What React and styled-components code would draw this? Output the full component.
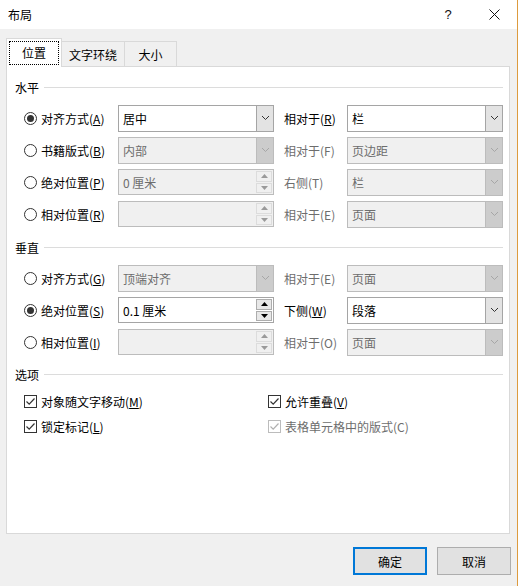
import React from 'react';
import styled, { createGlobalStyle, css } from 'styled-components';

const Global = createGlobalStyle`
  html, body { margin: 0; padding: 0; background: #fff; }
  body {
    font-family: "Noto Sans CJK SC", "Microsoft YaHei", sans-serif;
    font-size: 12px;
    color: #000;
  }
  * { box-sizing: border-box; }
`;

const Window = styled.div`
  width: 518px;
  height: 586px;
  border-right: 1px solid #dd9b3e;
  display: flex;
  flex-direction: column;
  background: #f0f0f0;
`;

const TitleBar = styled.div`
  height: 29px;
  flex: none;
  background: #fff;
  display: flex;
  align-items: center;
  padding-left: 8px;
`;

const Title = styled.div`
  flex: 1;
  font-size: 12px;
`;

const CaptionButton = styled.div`
  width: 46px;
  height: 29px;
  display: flex;
  align-items: center;
  justify-content: center;
  font-family: "Liberation Sans", sans-serif;
  font-size: 13px;
  color: #111;
`;

const Body = styled.div`
  flex: 1;
  display: flex;
  flex-direction: column;
  padding: 9px 7px 0 6px;
  min-height: 0;
`;

const TabRow = styled.div`
  display: flex;
  align-items: flex-end;
  height: 29px;
  margin-bottom: -1px;
  position: relative;
  z-index: 1;
`;

const Tab = styled.div`
  width: ${p => p.$w}px;
  display: flex;
  align-items: center;
  justify-content: center;
  border: 1px solid #d9d9d9;
  border-bottom: none;
  ${p => p.$active ? css`
    height: 29px;
    background: #fff;
  ` : css`
    height: 25px;
    margin-bottom: 1px;
    background: #f0f0f0;
    border-left: none;
  `}
`;

const Focus = styled.span`
  outline: 1px dotted #000;
  padding: 3px 12px 4px;
  line-height: 15px;
`;

const Panel = styled.div`
  flex: 1;
  background: #fff;
  border: 1px solid #d9d9d9;
  padding: 10px 6px 0 8px;
`;

const SectionHead = styled.div`
  height: 20px;
  display: flex;
  align-items: center;
  gap: 5px;
  margin-top: ${p => p.$mt || 0}px;
  margin-bottom: 5px;
  &::after {
    content: "";
    flex: 1;
    height: 1px;
    background: #dcdcdc;
  }
`;

const Grid = styled.div`
  display: grid;
  grid-template-columns: 94px 156px 73px 156px;
  padding-left: 9px;
`;

const Cell = styled.div`
  height: 32px;
  display: flex;
  align-items: center;
  gap: 4px;
  padding-left: ${p => p.$indent || 0}px;
  color: ${p => p.$disabled ? '#6d6d6d' : '#000'};
  white-space: nowrap;
`;

const RadioCircle = styled.span`
  width: 13px;
  height: 13px;
  border-radius: 50%;
  border: 1px solid #333;
  background: #fff;
  display: flex;
  align-items: center;
  justify-content: center;
  flex: none;
  &::after {
    content: "";
    width: 7px;
    height: 7px;
    border-radius: 50%;
    background: ${p => p.$on ? '#333' : 'transparent'};
  }
`;

const Field = styled.div`
  width: 156px;
  height: ${p => p.$h}px;
  display: flex;
  border: 1px solid ${p => p.$disabled ? '#bcbcbc' : '#a5a5a5'};
  background: ${p => p.$disabled ? '#f0f0f0' : '#fff'};
  color: ${p => p.$disabled ? '#6d6d6d' : '#000'};
`;

const FieldText = styled.div`
  flex: 1;
  display: flex;
  align-items: center;
  padding-left: 4px;
`;

const DropBtn = styled.div`
  width: 17px;
  display: flex;
  align-items: center;
  justify-content: center;
  border-left: 1px solid ${p => p.$disabled ? '#bcbcbc' : '#a5a5a5'};
  background: ${p => p.$disabled ? '#cccccc' : '#e3e3e3'};
`;

const SpinCol = styled.div`
  width: 17px;
  display: flex;
  flex-direction: column;
  padding: 1px 1px 1px 0;
  gap: 1px;
`;

const SpinBtn = styled.div`
  flex: 1;
  display: flex;
  align-items: center;
  justify-content: center;
  border: 1px solid ${p => p.$disabled ? '#dcdcdc' : '#adadad'};
  background: ${p => p.$disabled ? '#f0f0f0' : '#e8e8e8'};
`;

const CheckGrid = styled.div`
  display: grid;
  grid-template-columns: 244px 1fr;
  padding-left: 9px;
  margin-top: 1px;
`;

const CheckCell = styled.div`
  height: 25px;
  display: flex;
  align-items: center;
  gap: 4px;
  color: ${p => p.$disabled ? '#6d6d6d' : '#000'};
`;

const Box = styled.span`
  width: 13px;
  height: 13px;
  border: 1px solid ${p => p.$disabled ? '#bcbcbc' : '#333'};
  background: #fff;
  display: flex;
  align-items: center;
  justify-content: center;
  flex: none;
`;

const ButtonRow = styled.div`
  flex: none;
  display: flex;
  justify-content: flex-end;
  gap: 10px;
  padding: 13px 0 11px;
  margin-right: -1px;
`;

const Button = styled.div`
  width: 74px;
  height: 28px;
  display: flex;
  align-items: center;
  justify-content: center;
  background: #e1e1e1;
  border: ${p => p.$primary ? '2px solid #0078d7' : '1px solid #adadad'};
`;

const Chevron = ({ disabled }) => (
  <svg width="9" height="6" viewBox="0 0 9 6">
    <polyline points="1,1 4.5,4.5 8,1" fill="none" stroke={disabled ? '#a6a6a6' : '#333'} strokeWidth="1" />
  </svg>
);

const Tri = ({ up, disabled }) => (
  <svg width="7" height="4" viewBox="0 0 7 4">
    <polygon points={up ? '0,4 7,4 3.5,0' : '0,0 7,0 3.5,4'} fill={disabled ? '#9a9a9a' : '#000'} />
  </svg>
);

const Check = ({ disabled }) => (
  <svg width="11" height="11" viewBox="0 0 11 11">
    <polyline points="1.5,5.5 4.2,8.2 9.5,2.5" fill="none" stroke={disabled ? '#b0b0b0' : '#333'} strokeWidth="1.2" />
  </svg>
);

const Label = ({ text, acc, disabled }) => (
  <span>
    {text}({disabled ? acc : <u>{acc}</u>})
  </span>
);

const Combo = ({ value, disabled }) => (
  <Field $h={27} $disabled={disabled}>
    <FieldText>{value}</FieldText>
    <DropBtn $disabled={disabled}><Chevron disabled={disabled} /></DropBtn>
  </Field>
);

const Spin = ({ value, disabled }) => (
  <Field $h={26} $disabled={disabled}>
    <FieldText>{value}</FieldText>
    <SpinCol>
      <SpinBtn $disabled={disabled}><Tri up disabled={disabled} /></SpinBtn>
      <SpinBtn $disabled={disabled}><Tri disabled={disabled} /></SpinBtn>
    </SpinCol>
  </Field>
);

const Row = ({ radio, on, control, label2, rel }) => (
  <>
    <Cell>
      <RadioCircle $on={on} />
      <Label text={radio[0]} acc={radio[1]} />
    </Cell>
    <Cell>{control}</Cell>
    <Cell $indent={10} $disabled={label2.disabled}>
      <Label text={label2.text} acc={label2.acc} disabled={label2.disabled} />
    </Cell>
    <Cell><Combo value={rel.value} disabled={rel.disabled} /></Cell>
  </>
);

export default function App() {
  return (
    <>
      <Global />
      <Window>
        <TitleBar>
          <Title>布局</Title>
          <CaptionButton>?</CaptionButton>
          <CaptionButton>
            <svg width="11" height="11" viewBox="0 0 11 11">
              <path d="M0.5 0.5 L10.5 10.5 M10.5 0.5 L0.5 10.5" stroke="#111" strokeWidth="1" />
            </svg>
          </CaptionButton>
        </TitleBar>
        <Body>
          <TabRow>
            <Tab $active $w={56}><Focus>位置</Focus></Tab>
            <Tab $w={63}>文字环绕</Tab>
            <Tab $w={52}>大小</Tab>
          </TabRow>
          <Panel>
            <SectionHead>水平</SectionHead>
            <Grid>
              <Row radio={['对齐方式', 'A']} on
                control={<Combo value="居中" />}
                label2={{ text: '相对于', acc: 'R' }}
                rel={{ value: '栏' }} />
              <Row radio={['书籍版式', 'B']}
                control={<Combo value="内部" disabled />}
                label2={{ text: '相对于', acc: 'F', disabled: true }}
                rel={{ value: '页边距', disabled: true }} />
              <Row radio={['绝对位置', 'P']}
                control={<Spin value="0 厘米" disabled />}
                label2={{ text: '右侧', acc: 'T', disabled: true }}
                rel={{ value: '栏', disabled: true }} />
              <Row radio={['相对位置', 'R']}
                control={<Spin value="" disabled />}
                label2={{ text: '相对于', acc: 'E', disabled: true }}
                rel={{ value: '页面', disabled: true }} />
            </Grid>
            <SectionHead $mt={7}>垂直</SectionHead>
            <Grid>
              <Row radio={['对齐方式', 'G']}
                control={<Combo value="顶端对齐" disabled />}
                label2={{ text: '相对于', acc: 'E', disabled: true }}
                rel={{ value: '页面', disabled: true }} />
              <Row radio={['绝对位置', 'S']} on
                control={<Spin value="0.1 厘米" />}
                label2={{ text: '下侧', acc: 'W' }}
                rel={{ value: '段落' }} />
              <Row radio={['相对位置', 'I']}
                control={<Spin value="" disabled />}
                label2={{ text: '相对于', acc: 'O', disabled: true }}
                rel={{ value: '页面', disabled: true }} />
            </Grid>
            <SectionHead $mt={6}>选项</SectionHead>
            <CheckGrid>
              <CheckCell><Box><Check /></Box><Label text="对象随文字移动" acc="M" /></CheckCell>
              <CheckCell><Box><Check /></Box><Label text="允许重叠" acc="V" /></CheckCell>
              <CheckCell><Box><Check /></Box><Label text="锁定标记" acc="L" /></CheckCell>
              <CheckCell $disabled><Box $disabled><Check disabled /></Box><Label text="表格单元格中的版式" acc="C" disabled /></CheckCell>
            </CheckGrid>
          </Panel>
          <ButtonRow>
            <Button $primary>确定</Button>
            <Button>取消</Button>
          </ButtonRow>
        </Body>
      </Window>
    </>
  );
}
